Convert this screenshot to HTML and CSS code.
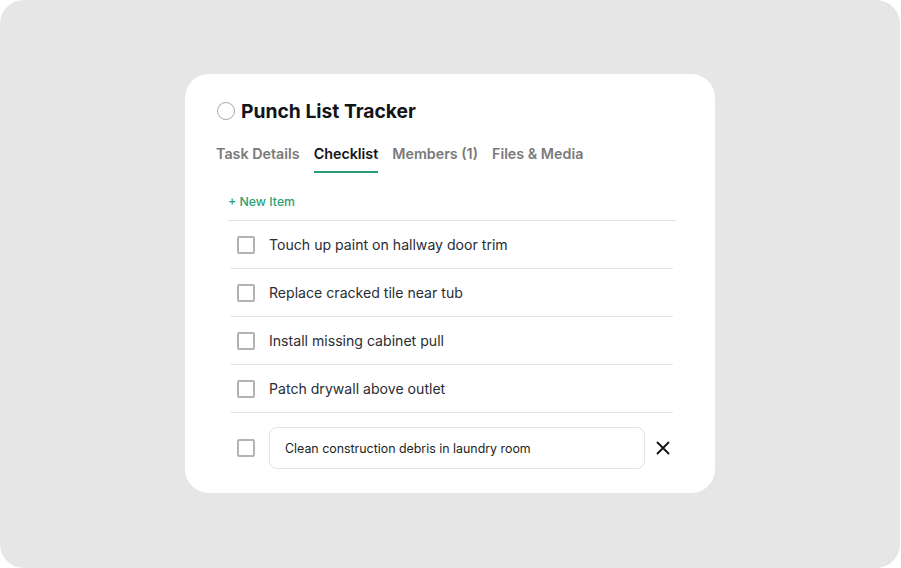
FILE: index.html
```html
<!DOCTYPE html>
<html lang="en">

<head>
    <meta charset="UTF-8">
    <meta name="viewport" content="width=device-width, initial-scale=1.0">
    <link rel="stylesheet" href="styles.css">
    <title>Punch List Tracker</title>
</head>

<body>

    <div class="frame">
        <div class="card">
            <div class="title">
                <span class="status"></span>
                <h1>Punch List Tracker</h1>
            </div>

            <div class="tabs">
                <span class="tab">Task Details</span>
                <span class="tab active">Checklist</span>
                <span class="tab">Members (1)</span>
                <span class="tab">Files &amp; Media</span>
            </div>

            <div class="checklist">
                <div class="new-item">+ New Item</div>
                <ul class="items">
                    <li class="item"><span class="box"></span><span>Touch up paint on hallway door trim</span></li>
                    <li class="item"><span class="box"></span><span>Replace cracked tile near tub</span></li>
                    <li class="item"><span class="box"></span><span>Install missing cabinet pull</span></li>
                    <li class="item"><span class="box"></span><span>Patch drywall above outlet</span></li>
                    <li class="item editing">
                        <span class="box"></span>
                        <input type="text" class="edit" value="Clean construction debris in laundry room">
                        <svg class="remove" width="14" height="14" viewBox="0 0 14 14">
                            <path d="M1.5 1.5 L12.5 12.5 M12.5 1.5 L1.5 12.5" stroke="#111" stroke-width="1.8" stroke-linecap="round" fill="none" />
                        </svg>
                    </li>
                </ul>
            </div>
        </div>
    </div>

</body>

</html>
```

FILE: styles.css
```css
* {
    box-sizing: border-box;
}

body {
    margin: 0;
    background: #ffffff;
    font-family: 'Inter', 'Roboto', sans-serif;
}

.frame {
    width: 900px;
    height: 568px;
    background: #e6e6e6;
    border-radius: 24px;
    padding-top: 74px;
    padding-left: 185px;
}

.card {
    width: 530px;
    height: 419px;
    background: #ffffff;
    border-radius: 24px;
    padding: 26px 31px 0 31px;
}

.title {
    display: flex;
    align-items: center;
    gap: 6px;
    margin-left: 1px;
}

.status {
    width: 18px;
    height: 18px;
    border: 1.5px solid #a8a8a8;
    border-radius: 50%;
}

.title h1 {
    margin: 0;
    font-size: 19.3px;
    font-weight: 700;
    color: #111418;
    line-height: 22px;
}

.tabs {
    display: flex;
    gap: 14px;
    margin-top: 23px;
}

.tab {
    font-size: 14.3px;
    font-weight: 600;
    color: #7a7a7a;
    padding-bottom: 8px;
    border-bottom: 2px solid transparent;
    line-height: 18px;
}

.tab.active {
    color: #111418;
    border-bottom-color: #2a9d72;
}

.checklist {
    margin: 0 8px 0 12px;
}

.new-item {
    margin-top: 22px;
    font-size: 12.3px;
    font-weight: 500;
    color: #2aa274;
    padding-bottom: 11px;
    border-bottom: 1px solid #e4e4e4;
    line-height: 14px;
}

.items {
    list-style: none;
    margin: 0 3px 0 2px;
    padding: 0;
}

.item {
    display: flex;
    align-items: center;
    gap: 14px;
    height: 48px;
    padding-left: 7px;
    border-bottom: 1px solid #e6e6e6;
    font-size: 14.1px;
    color: #2a2d35;
}

.box {
    flex: none;
    width: 18px;
    height: 18px;
    border: 2px solid #b3b3b3;
    border-radius: 2px;
}

.item.editing {
    border-bottom: none;
    height: 70px;
}

.edit {
    width: 376px;
    height: 42px;
    border: 1px solid #e3e3e3;
    border-radius: 8px;
    padding: 0 15px;
    font-family: inherit;
    font-size: 12.4px;
    color: #1c1e22;
    outline: none;
}

.remove {
    margin-left: -3px;
}
```
